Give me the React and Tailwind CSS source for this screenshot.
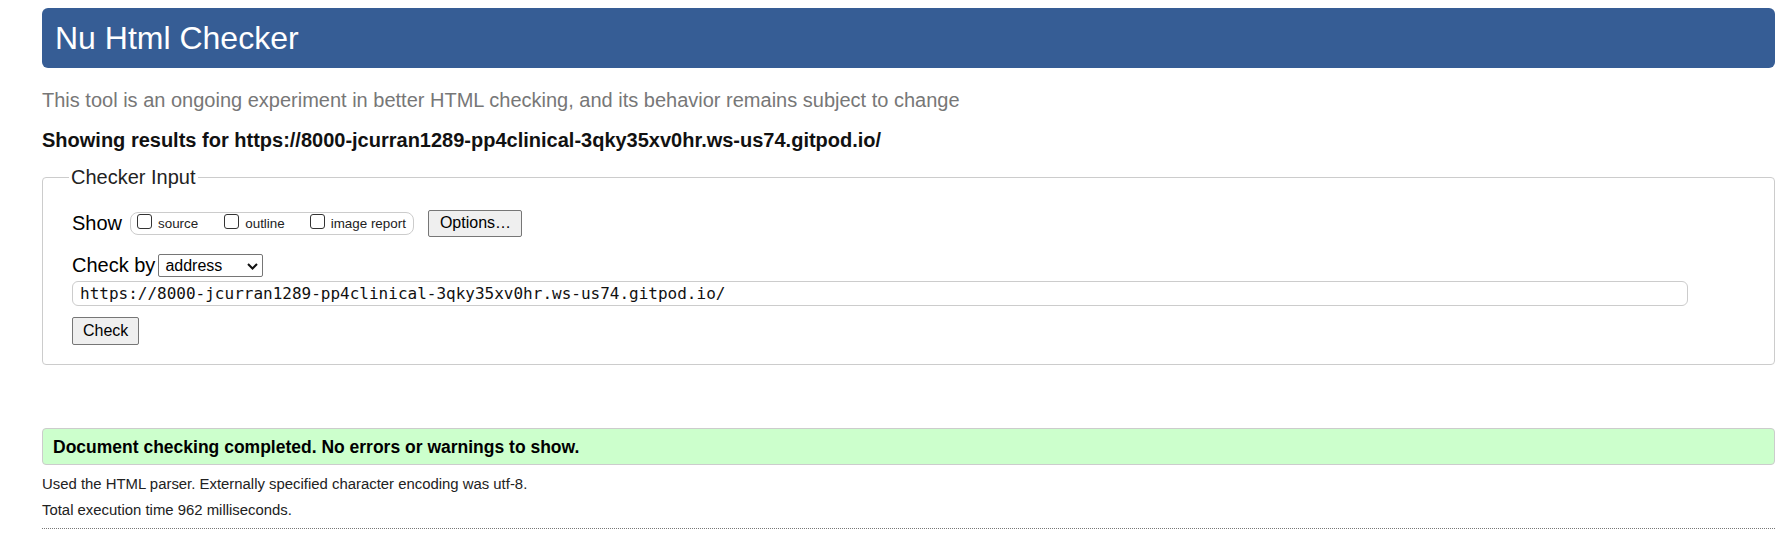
import { useState } from "react";

const URL = "https://8000-jcurran1289-pp4clinical-3qky35xv0hr.ws-us74.gitpod.io/";

const ShowOption = ({ label, className }) => (
  <label className={`inline-flex items-baseline ${className}`}>
    <input
      type="checkbox"
      className="appearance-none w-[15px] h-[15px] mr-[6px] border border-[#333] rounded-[3px] bg-white self-baseline relative top-[1px]"
    />
    <span>{label}</span>
  </label>
);

export default function App() {
  const [mode, setMode] = useState("address");

  return (
    <div className="min-h-screen bg-white pl-[42px] pr-[7px] pt-[8px] font-['Liberation_Sans',Arial,sans-serif] text-black">
      {/* title bar */}
      <div className="h-[60px] flex items-center pl-[13px] rounded-[6px] bg-[#365d95]">
        <h1 className="text-[32px] leading-[32px] text-white">Nu Html Checker</h1>
      </div>

      <p className="mt-[21px] text-[20px] leading-[23px] text-[#777]">
        This tool is an ongoing experiment in better HTML checking, and its behavior remains subject to change
      </p>
      <p className="mt-[17px] text-[20px] leading-[23px] font-bold text-[#111]">
        Showing results for {URL}
      </p>

      <fieldset className="mt-[14px] border border-[#ccc] rounded-[4px] pl-[29px] pr-[8px] pb-[19px]">
        <legend className="ml-[-3px] px-[2px] text-[20px] leading-[23px] text-[#222]">Checker Input</legend>

        <div className="mt-[20px] h-[28px] flex items-center">
          <span className="text-[20px] leading-[23px]">Show</span>
          <div className="ml-[8px] h-[23px] flex items-baseline leading-[21px] pl-[6px] pr-[7px] border border-[#ccc] rounded-[8px] text-[13.4px] text-[#222]">
            <ShowOption label="source" className="mr-[26px]" />
            <ShowOption label="outline" className="mr-[25px]" />
            <ShowOption label="image report" />
          </div>
          <button className="ml-[14px] w-[94px] h-[27px] flex items-center pl-[11px] bg-[#efefef] border border-[#767676] rounded-[2px] text-[16px] text-black">
            Options…
          </button>
        </div>

        <div className="mt-[17px] h-[23px] flex items-center">
          <span className="text-[20px] leading-[23px]">Check by</span>
          <div className="relative ml-[3px]">
            <select
              value={mode}
              onChange={(e) => setMode(e.target.value)}
              className="appearance-none block w-[105px] h-[23px] pl-[6px] bg-white border border-[#767676] rounded-[2px] text-[16px] leading-[21px] text-black"
            >
              <option value="address">address</option>
              <option value="file">file upload</option>
              <option value="text">text input</option>
            </select>
            <svg className="absolute left-[89px] top-[9px] pointer-events-none" width="11" height="7" viewBox="0 0 11 7">
              <path d="M1 1 L5.5 5.5 L10 1" fill="none" stroke="#111" strokeWidth="2" />
            </svg>
          </div>
        </div>

        <input
          type="text"
          defaultValue={URL}
          className="mt-[4px] block w-[1616px] h-[25px] pl-[7px] border border-[#ccc] rounded-[6px] font-['DejaVu_Sans_Mono',monospace] text-[16px] text-[#111] outline-none"
        />

        <button className="mt-[11px] w-[67px] h-[28px] flex items-center pl-[10px] bg-[#efefef] border border-[#767676] rounded-[2px] text-[16px] text-black">
          Check
        </button>
      </fieldset>

      <div className="mt-[63px] h-[37px] flex items-center pl-[10px] bg-[#ccffcc] border border-[#ccc] rounded-[4px]">
        <p className="text-[17.5px] leading-[20px] font-bold">
          Document checking completed. No errors or warnings to show.
        </p>
      </div>

      <p className="mt-[10px] text-[14.9px] leading-[18px] text-[#222]">
        Used the HTML parser. Externally specified character encoding was utf-8.
      </p>
      <p className="mt-[8px] text-[14.9px] leading-[18px] text-[#222]">
        Total execution time 962 milliseconds.
      </p>
      <div className="mt-[9px] border-t border-dotted border-[#777]" />
    </div>
  );
}
